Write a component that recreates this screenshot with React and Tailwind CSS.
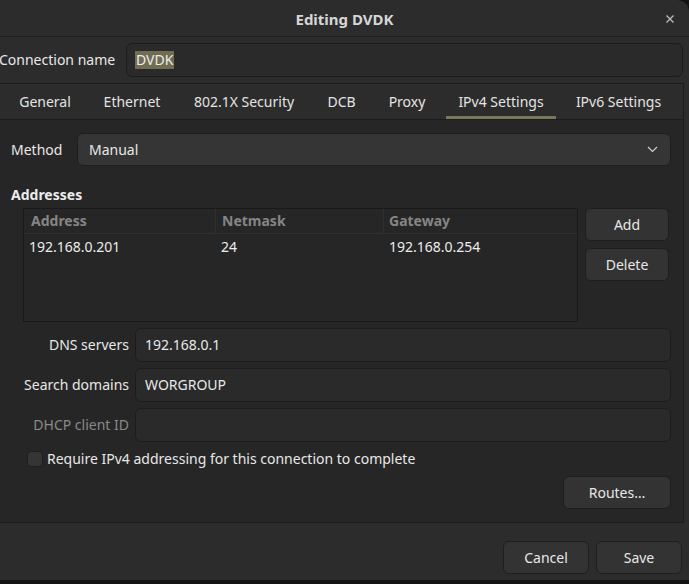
import React from "react";

const tabs = [
  ["General", "w-[76px]"],
  ["Ethernet", "w-[82px]"],
  ["802.1X Security", "w-[126px]"],
  ["DCB", "w-[53px]"],
  ["Proxy", "w-[62px]"],
  ["IPv4 Settings", "w-[110px]"],
  ["IPv6 Settings", "w-[109px]"],
];

function Button({ children, className = "" }) {
  return (
    <div
      className={
        "flex items-center justify-center rounded-[6px] border border-[#1e1e1e] bg-[#333333] text-[#e8e8e8] " +
        className
      }
    >
      {children}
    </div>
  );
}

function Field({ label, value, dim }) {
  return (
    <div className="flex items-center h-[34px]">
      <div
        className={
          "w-[118px] text-right shrink-0 " +
          (dim ? "text-[#8a8a8a]" : "text-[#e8e8e8]")
        }
      >
        {label}
      </div>
      <div className="ml-[6px] flex-1 h-[34px] rounded-[6px] border border-[#1c1c1c] bg-[#2a2a2a] flex items-center pl-[9px] text-[#e8e8e8]">
        {value}
      </div>
    </div>
  );
}

export default function App() {
  return (
    <div
      className="w-[689px] h-[584px] bg-[#141414] overflow-hidden text-[14px] leading-none"
      style={{ fontFamily: '"Noto Sans", sans-serif' }}
    >
      <div className="h-[580px] bg-[#2c2c2c] rounded-tr-[12px] flex flex-col">
        {/* Title bar */}
        <div className="h-[37px] shrink-0 border-b border-[#1f1f1f] grid grid-cols-[1fr_auto_1fr] items-center">
          <div />
          <div className="font-bold text-[#d6d6d6] text-[15px] pt-[3px]">Editing DVDK</div>
          <div className="flex justify-end pr-[14px] pt-[1px]">
            <svg width="10" height="10" viewBox="0 0 10 10" className="text-[#bdbdbd]">
              <path d="M1.5 1.5 L8.5 8.5 M8.5 1.5 L1.5 8.5" stroke="currentColor" strokeWidth="1.3" />
            </svg>
          </div>
        </div>

        {/* Connection name */}
        <div className="h-[46px] shrink-0 flex items-center pr-[6px]">
          <div className="-ml-[1px] text-[#e8e8e8] w-[127px] shrink-0">Connection name</div>
          <div className="flex-1 h-[34px] rounded-[6px] border border-[#1c1c1c] bg-[#2a2a2a] flex items-center pl-[8px]">
            <span className="bg-[#706d52] text-[#ececec] px-[1px] py-[2px]">DVDK</span>
          </div>
        </div>

        {/* Notebook */}
        <div className="flex-1 flex flex-col -ml-px mr-[5px] border border-[#1c1c1c] border-b-0">
          <div className="h-[36px] shrink-0 flex items-stretch border-b border-[#1c1c1c] pl-[7px] gap-[8px] text-[#e4e4e4]">
            {tabs.map(([t, w]) => (
              <div
                key={t}
                className={
                  "flex items-center justify-center border-b-[3px] " +
                  w +
                  " " +
                  (t === "IPv4 Settings" ? "border-[#7b7858]" : "border-transparent")
                }
              >
                <span className="mt-[3px]">{t}</span>
              </div>
            ))}
          </div>

          <div className="flex-1 bg-[#262626] border-b border-[#1c1c1c] pl-[11px] pr-[12px] pt-[13px] flex flex-col">
            {/* Method */}
            <div className="flex items-center h-[33px]">
              <div className="w-[66px] text-[#e8e8e8]">Method</div>
              <div className="flex-1 h-[33px] rounded-[6px] border border-[#1e1e1e] bg-[#353535] flex items-center justify-between pl-[11px] pr-[12px] text-[#e8e8e8]">
                <span>Manual</span>
                <svg width="11" height="7" viewBox="0 0 11 7" className="text-[#cfcfcf]">
                  <path d="M1 1 L5.5 5.5 L10 1" fill="none" stroke="currentColor" strokeWidth="1.2" />
                </svg>
              </div>
            </div>

            <div className="mt-[22px] font-bold text-[#ececec]">Addresses</div>

            {/* Table + buttons */}
            <div className="mt-[6px] ml-[12px] flex gap-[7px]">
              <div className="w-[555px] h-[114px] border border-[#1a1a1a] bg-[#262626] flex flex-col">
                <div className="h-[25px] border-b border-[#2f2f2f] flex font-bold text-[#858585]">
                  <div className="w-[192px] border-r border-[#2f2f2f] pl-[7px] flex items-center">Address</div>
                  <div className="w-[168px] border-r border-[#2f2f2f] pl-[6px] flex items-center">Netmask</div>
                  <div className="flex-1 pl-[5px] flex items-center">Gateway</div>
                </div>
                <div className="h-[26px] flex items-center text-[#ececec]">
                  <div className="w-[192px] pl-[5px]">192.168.0.201</div>
                  <div className="w-[168px] pl-[5px]">24</div>
                  <div className="flex-1 pl-[5px]">192.168.0.254</div>
                </div>
              </div>
              <div className="flex flex-col gap-[7px]">
                <Button className="w-[84px] h-[33px]">Add</Button>
                <Button className="w-[84px] h-[33px]">Delete</Button>
              </div>
            </div>

            {/* Fields */}
            <div className="mt-[6px] flex flex-col gap-[6px]">
              <Field label="DNS servers" value="192.168.0.1" />
              <Field label="Search domains" value="WORGROUP" />
              <Field label="DHCP client ID" value="" dim />
            </div>

            <div className="mt-[9px] ml-[16px] flex items-center gap-[4px]">
              <div className="w-[16px] h-[16px] rounded-[4px] border border-[#1e1e1e] bg-[#353535]" />
              <span className="text-[#e8e8e8]">Require IPv4 addressing for this connection to complete</span>
            </div>

            <div className="mt-[9px] flex justify-end">
              <Button className="w-[108px] h-[33px]">Routes…</Button>
            </div>
          </div>
        </div>

        {/* Bottom buttons */}
        <div className="h-[57px] shrink-0 flex items-start justify-end gap-[7px] pr-[7px] pt-[18px]">
          <Button className="w-[86px] h-[33px]">Cancel</Button>
          <Button className="w-[86px] h-[33px]">Save</Button>
        </div>
      </div>
    </div>
  );
}
